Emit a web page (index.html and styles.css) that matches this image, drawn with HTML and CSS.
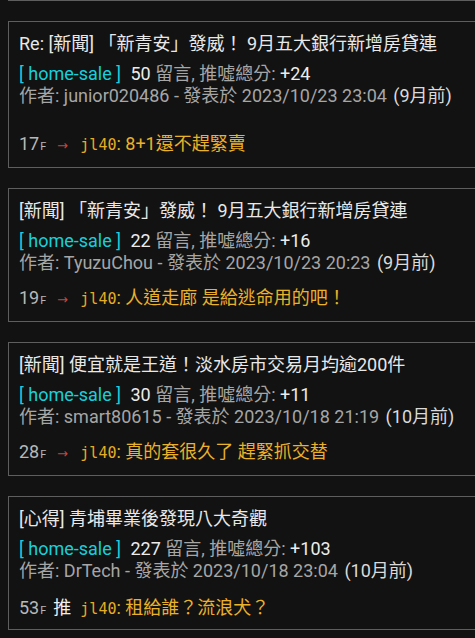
FILE: index.html
```html
<!DOCTYPE html>
<html lang="zh-Hant">
<head>
<meta charset="utf-8">
<title>home-sale</title>
<link rel="stylesheet" href="styles.css">
</head>
<body>
<div class="feed">
  <div class="card-tail"></div>

  <article class="post post--loose">
    <div class="title">Re: [新聞] 「新青安」發威！ 9月五大銀行新增房貸連</div>
    <div class="stats"><span class="board">[ home-sale ]</span> <span class="num">50</span> 留言, 推噓總分: <span class="num">+24</span></div>
    <div class="author">作者: junior020486 - 發表於 2023/10/23 23:04 <span class="ago">(9月前)</span></div>
    <div class="push"><span class="floor">17<span class="floor-f">F</span></span><span class="tag tag--arrow">→</span><span class="user">jl40</span><span class="content">: 8+1還不趕緊賣</span></div>
  </article>

  <article class="post">
    <div class="title">[新聞] 「新青安」發威！ 9月五大銀行新增房貸連</div>
    <div class="stats"><span class="board">[ home-sale ]</span> <span class="num">22</span> 留言, 推噓總分: <span class="num">+16</span></div>
    <div class="author">作者: TyuzuChou - 發表於 2023/10/23 20:23 <span class="ago">(9月前)</span></div>
    <div class="push"><span class="floor">19<span class="floor-f">F</span></span><span class="tag tag--arrow">→</span><span class="user">jl40</span><span class="content">: 人道走廊 是給逃命用的吧！</span></div>
  </article>

  <article class="post">
    <div class="title">[新聞] 便宜就是王道！淡水房市交易月均逾200件</div>
    <div class="stats"><span class="board">[ home-sale ]</span> <span class="num">30</span> 留言, 推噓總分: <span class="num">+11</span></div>
    <div class="author">作者: smart80615 - 發表於 2023/10/18 21:19 <span class="ago">(10月前)</span></div>
    <div class="push"><span class="floor">28<span class="floor-f">F</span></span><span class="tag tag--arrow">→</span><span class="user">jl40</span><span class="content">: 真的套很久了 趕緊抓交替</span></div>
  </article>

  <article class="post">
    <div class="title">[心得] 青埔畢業後發現八大奇觀</div>
    <div class="stats"><span class="board">[ home-sale ]</span> <span class="num">227</span> 留言, 推噓總分: <span class="num">+103</span></div>
    <div class="author">作者: DrTech - 發表於 2023/10/18 23:04 <span class="ago">(10月前)</span></div>
    <div class="push"><span class="floor">53<span class="floor-f">F</span></span><span class="tag tag--push">推</span><span class="user">jl40</span><span class="content">: 租給誰？流浪犬？</span></div>
  </article>
</div>
</body>
</html>
```
FILE: styles.css
```css
html, body {
  margin: 0;
  padding: 0;
  background: #121212;
  overflow: hidden;
}

body {
  font-family: Roboto, "Noto Sans CJK TC", sans-serif;
  font-size: 18px;
  color: #e8e8e8;
}

.feed {
  padding-left: 8px;
  overflow: hidden;
}

.card-tail {
  height: 0;
  border-bottom: 1px solid #5e5e5e;
  margin-right: -30px;
  margin-bottom: 20px;
}

.post {
  border: 1px solid #5e5e5e;
  margin-right: -30px;
  margin-bottom: 20px;
  padding: 11px 10px 12px;
  line-height: 22px;
  white-space: nowrap;
}

.title,
.stats,
.author,
.push {
  height: 22px;
}

.title {
  color: #e8e8e8;
  margin-bottom: 8px;
}

.stats,
.author {
  color: #a6a6a6;
}

.board {
  color: #16d0dc;
  margin-right: 5px;
}

.num {
  color: #ececec;
}

.ago {
  color: #dadada;
  margin-left: 2px;
}

.push {
  margin-top: 13px;
}

.post--loose .push {
  margin-top: 26px;
}

.floor {
  color: #b8b8b8;
  margin-right: 7px;
}

.floor-f {
  font-size: 11px;
  margin-left: 1px;
}

.tag {
  display: inline-block;
  width: 18px;
  text-align: center;
  margin-right: 9px;
}

.tag--arrow {
  font-family: "DejaVu Sans", sans-serif;
  font-size: 13px;
  color: #b84a48;
}

.tag--push {
  font-family: "Noto Sans CJK TC", sans-serif;
  color: #f0f0f0;
}

.user {
  font-family: "DejaVu Sans Mono", monospace;
  font-size: 15px;
  color: #e6ad22;
}

.content {
  color: #eab12a;
}
```
